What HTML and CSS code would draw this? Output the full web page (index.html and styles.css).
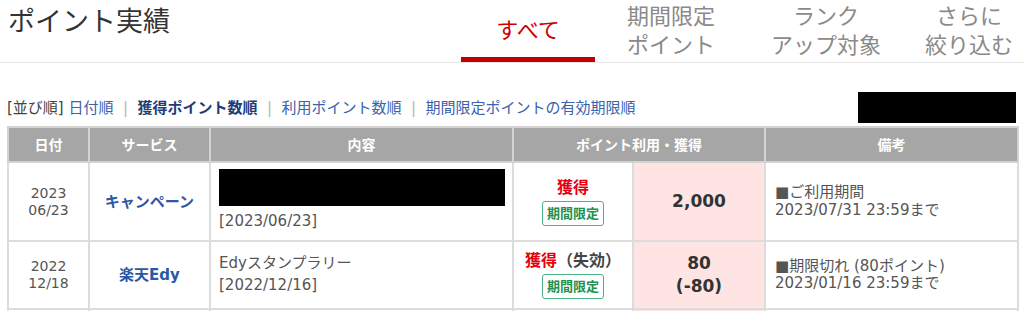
FILE: index.html
```html
<!DOCTYPE html>
<html lang="ja">
<head>
<meta charset="utf-8">
<title>ポイント実績</title>
<link rel="stylesheet" href="styles.css">
</head>
<body>
<div class="page">
  <header class="top">
    <h1 class="title">ポイント実績</h1>
    <nav class="tabs">
      <a class="tab tab-all active" href="#">すべて</a>
      <a class="tab tab-limited" href="#"><span>期間限定</span><span>ポイント</span></a>
      <a class="tab tab-rank" href="#"><span>ランク</span><span>アップ対象</span></a>
      <a class="tab tab-more" href="#"><span>さらに</span><span>絞り込む</span></a>
    </nav>
  </header>

  <div class="sortbar">
    <div class="sort">
      <span class="sort-label">[並び順]</span>
      <a class="sort-link" href="#">日付順</a><span class="sep">|</span><a class="sort-link current" href="#">獲得ポイント数順</a><span class="sep">|</span><a class="sort-link" href="#">利用ポイント数順</a><span class="sep">|</span><a class="sort-link" href="#">期間限定ポイントの有効期限順</a>
    </div>
    <div class="redact redact-sm"></div>
  </div>

  <table class="history">
    <colgroup>
      <col class="w-date">
      <col class="w-svc">
      <col class="w-body">
      <col class="w-type">
      <col class="w-pts">
      <col class="w-note">
    </colgroup>
    <thead>
      <tr>
        <th>日付</th>
        <th>サービス</th>
        <th>内容</th>
        <th colspan="2">ポイント利用・獲得</th>
        <th>備考</th>
      </tr>
    </thead>
    <tbody>
      <tr>
        <td class="c-date">2023<br>06/23</td>
        <td class="c-svc"><a href="#">キャンペーン</a></td>
        <td class="c-body"><span class="redact redact-lg"></span>[2023/06/23]</td>
        <td class="c-type"><span class="label">獲得</span><span class="badge">期間限定</span></td>
        <td class="c-pts">2,000</td>
        <td class="c-note">■ご利用期間<br>2023/07/31 23:59まで</td>
      </tr>
      <tr>
        <td class="c-date">2022<br>12/18</td>
        <td class="c-svc"><a href="#">楽天Edy</a></td>
        <td class="c-body">Edyスタンプラリー<br>[2022/12/16]</td>
        <td class="c-type"><span class="label">獲得<span class="sub">（失効）</span></span><span class="badge">期間限定</span></td>
        <td class="c-pts">80<br>(-80)</td>
        <td class="c-note">■期限切れ (80ポイント)<br>2023/01/16 23:59まで</td>
      </tr>
      <tr>
        <td class="c-date">&nbsp;<br>&nbsp;</td>
        <td class="c-svc">&nbsp;</td>
        <td class="c-body">&nbsp;<br>&nbsp;</td>
        <td class="c-type">&nbsp;</td>
        <td class="c-pts">&nbsp;</td>
        <td class="c-note">&nbsp;</td>
      </tr>
    </tbody>
  </table>
</div>
</body>
</html>
```

FILE: styles.css
```css
html, body {
  margin: 0;
  padding: 0;
  background: #fff;
}

body {
  font-family: "DejaVu Sans", "Noto Sans CJK JP", sans-serif;
  color: #333;
  overflow: hidden;
}

a {
  text-decoration: none;
}

.page {
  width: 1024px;
  overflow: hidden;
}

/* ---------- header ---------- */
.top {
  display: flex;
  height: 62px;
  border-bottom: 1px solid #e6e6e6;
  padding-left: 8px;
}

.title {
  flex: 0 0 453px;
  margin: 0;
  font-family: "Noto Sans CJK JP", sans-serif;
  font-weight: 400;
  font-size: 27px;
  line-height: 40px;
  color: #333;
}

.tabs {
  display: flex;
  flex-shrink: 0;
}

.tab {
  display: flex;
  flex-direction: column;
  align-items: center;
  flex-shrink: 0;
  font-family: "Noto Sans CJK JP", sans-serif;
  font-size: 22px;
  line-height: 29px;
  color: #8a8a8a;
}

.tab-all {
  width: 134px;
  height: 57px;
  justify-content: center;
  border-bottom: 5px solid #c00000;
  color: #cc0000;
}

.tab-limited { width: 152px; }
.tab-rank { width: 158px; }
.tab-more { width: 128px; }

/* ---------- sort bar ---------- */
.sortbar {
  display: flex;
  justify-content: space-between;
  align-items: center;
  height: 31px;
  margin-top: 29px;
  padding: 0 8px 0 7px;
}

.sort {
  font-size: 15px;
  line-height: 20px;
  white-space: nowrap;
}

.sort-label {
  color: #444;
}

.sort-link {
  color: #3a62ad;
}

.sort-link.current {
  color: #1f3b78;
  font-weight: 700;
}

.sep {
  display: inline-block;
  width: 24px;
  text-align: center;
  color: #b5b5b5;
}

.redact {
  background: #000;
}

.redact-sm {
  width: 158px;
  height: 31px;
}

/* ---------- table ---------- */
.history {
  width: 1010px;
  margin: 3px 7px 0;
  border-collapse: collapse;
  table-layout: fixed;
}

.w-date { width: 81px; }
.w-svc { width: 121px; }
.w-body { width: 303px; }
.w-type { width: 120px; }
.w-pts { width: 132px; }
.w-note { width: 253px; }

.history th {
  background: #a6a6a6;
  color: #fff;
  font-family: "Noto Sans CJK JP", sans-serif;
  font-size: 14px;
  font-weight: 700;
  line-height: 19px;
  padding: 7px 4px;
  border: 2px solid #d2d2d2;
  text-align: center;
}

.history td {
  border: 2px solid #dcdcdc;
  padding: 9px 8px;
  vertical-align: middle;
  font-size: 15px;
  line-height: 22px;
  color: #555;
}

.history td.c-date {
  text-align: center;
  font-size: 14px;
  line-height: 17px;
}

.history td.c-svc {
  text-align: center;
  font-weight: 700;
}

.c-svc a {
  color: #2a58a6;
}

.history td.c-body {
  padding: 6px 8px 8px;
}

.redact-lg {
  display: block;
  width: 286px;
  height: 37px;
  margin-bottom: 4px;
}

.history td.c-type {
  text-align: center;
  padding-left: 2px;
  padding-right: 2px;
}

.label {
  display: block;
  font-size: 16px;
  line-height: 20px;
  font-weight: 700;
  color: #e60012;
}

.label .sub {
  color: #444;
}

.badge {
  display: inline-block;
  margin-top: 3px;
  padding: 0 4px;
  border: 1px solid #4cb387;
  border-radius: 3px;
  font-size: 13px;
  line-height: 23px;
  font-weight: 700;
  color: #22914f;
}

.history td.c-pts {
  background: #ffe4e4;
  text-align: center;
  font-size: 17px;
  line-height: 23px;
  font-weight: 700;
  color: #333;
}

.history td.c-note {
  padding-left: 9px;
  line-height: 17.5px;
  color: #555;
}
```
